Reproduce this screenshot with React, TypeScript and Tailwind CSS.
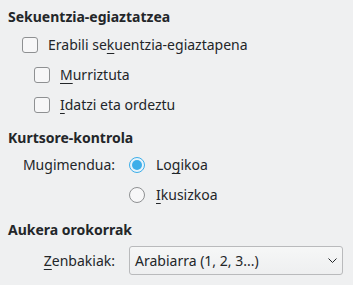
import React from "react";

function Checkbox() {
  return (
    <span className="box-border block w-[16px] h-[16px] shrink-0 rounded-[3px] border border-[#8e9092] bg-[#f7f7f8]" />
  );
}

function Radio({ checked }: { checked?: boolean }) {
  if (checked) {
    return (
      <span className="box-border flex items-center justify-center w-[16px] h-[16px] shrink-0 rounded-full border border-[#3daee9] bg-[#e6f3fb]">
        <span className="block w-[10px] h-[10px] rounded-full bg-[#3daee9]" />
      </span>
    );
  }
  return (
    <span className="box-border block w-[16px] h-[16px] shrink-0 rounded-full border border-[#8e9092] bg-[#f7f7f8]" />
  );
}

function U({ children }: { children: React.ReactNode }) {
  return <u className="underline underline-offset-[3px] decoration-1">{children}</u>;
}

export default function App() {
  return (
    <div className="w-[353px] h-[285px] bg-[#eff0f1] text-[#232629] text-[14px] leading-[20px] overflow-hidden font-['Noto_Sans','DejaVu_Sans',sans-serif]">
      <div className="pt-[7px] pl-[8px] flex flex-col">
        <div className="h-[20px] font-bold">Sekuentzia-egiaztatzea</div>
        <div className="mt-[3px] h-[30px] flex items-center pl-[14px] gap-[10px]">
          <Checkbox />
          <span>
            Erabili se<U>k</U>uentzia-egiaztapena
          </span>
        </div>
        <div className="h-[30px] flex items-center pl-[26px] gap-[10px]">
          <Checkbox />
          <span>
            <U>M</U>urriztuta
          </span>
        </div>
        <div className="h-[30px] flex items-center pl-[26px] gap-[10px]">
          <Checkbox />
          <span>
            <U>I</U>datzi eta ordeztu
          </span>
        </div>

        <div className="mt-[8px] h-[20px] font-bold">Kurtsore-kontrola</div>
        <div className="mt-[2px] h-[30px] flex items-center">
          <div className="w-[107px] text-right">Mugimendua:</div>
          <div className="ml-[14px] flex items-center gap-[11px]">
            <Radio checked />
            <span>
              Lo<U>g</U>ikoa
            </span>
          </div>
        </div>
        <div className="h-[30px] flex items-center">
          <div className="w-[107px]" />
          <div className="ml-[14px] flex items-center gap-[11px]">
            <Radio />
            <span>
              <U>I</U>kusizkoa
            </span>
          </div>
        </div>

        <div className="mt-[10px] h-[20px] font-bold">Aukera orokorrak</div>
        <div className="mt-[6px] h-[29px] flex items-center">
          <div className="w-[107px] text-right">
            <U>Z</U>enbakiak:
          </div>
          <div className="ml-[14px] box-border w-[214px] h-[29px] rounded-[3px] border border-[#b9babc] bg-gradient-to-b from-[#f6f7f7] to-[#eeeff0] flex items-center pl-[5px] pr-[5px] justify-between">
            <span>Arabiarra (1, 2, 3...)</span>
            <svg width="9" height="6" viewBox="0 0 9 6" className="block">
              <path d="M0.5 0.5 L4.5 4.5 L8.5 0.5" fill="none" stroke="#232629" strokeWidth="1" />
            </svg>
          </div>
        </div>
      </div>
    </div>
  );
}
